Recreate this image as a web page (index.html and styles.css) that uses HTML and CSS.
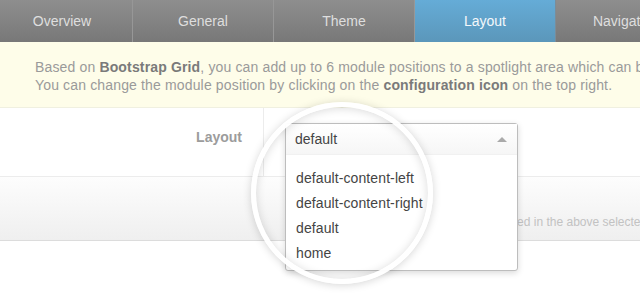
FILE: index.html
```html
<!DOCTYPE html>
<html>
<head>
<meta charset="utf-8">
<link rel="stylesheet" href="styles.css">
</head>
<body>
<div class="page">
  <nav class="tabs">
    <a class="tab">Overview</a>
    <a class="tab">General</a>
    <a class="tab">Theme</a>
    <a class="tab active">Layout</a>
    <a class="tab">Navigation</a>
  </nav>
  <div class="notice">
    <p>Based on <b>Bootstrap Grid</b>, you can add up to 6 module positions to a spotlight area which can be resized.</p>
    <p>You can change the module position by clicking on the <b>configuration icon</b> on the top right.</p>
  </div>
  <div class="form-row">
    <div class="label-cell">Layout</div>
    <div class="control-cell">
      <div class="chosen">
        <div class="chosen-head">
          <span>default</span>
          <span class="arrow"></span>
        </div>
        <ul class="chosen-list">
          <li>default-content-left</li>
          <li>default-content-right</li>
          <li>default</li>
          <li>home</li>
        </ul>
      </div>
    </div>
  </div>
  <div class="band">
    <span class="band-text">Modules of each position are positioned in the above selected layout</span>
  </div>
  <div class="lens"></div>
</div>
</body>
</html>
```
FILE: styles.css
```css
html, body {
  margin: 0;
  padding: 0;
  background: #fff;
}
body {
  font-family: "Liberation Sans", Arial, sans-serif;
  width: 640px;
  height: 300px;
  overflow: hidden;
}
.page {
  position: relative;
  width: 640px;
  height: 300px;
  overflow: hidden;
}
.tabs {
  display: flex;
  margin-left: -8px;
  height: 42px;
  background: linear-gradient(#8e8e8e, #787878);
}
.tab {
  flex: 0 0 140px;
  border-right: 1px solid #979797;
  display: flex;
  align-items: center;
  justify-content: center;
  font-size: 14px;
  color: #dedede;
  white-space: nowrap;
}
.tab.active {
  background: linear-gradient(#65acd7, #5b97ba);
  color: #f4f8fb;
  border-right-color: #7b8c98;
}
.notice {
  background: #fefde9;
  height: 66px;
  box-sizing: border-box;
  padding: 16px 0 0 35px;
  border-bottom: 1px solid #f0f0e0;
  font-size: 14px;
  letter-spacing: 0.15px;
  line-height: 18px;
  color: #9a9a9a;
  white-space: nowrap;
}
.notice p {
  margin: 0;
}
.notice b {
  color: #7a7a7a;
}
.form-row {
  display: flex;
  height: 68px;
  border-bottom: 1px solid #ececec;
}
.label-cell {
  width: 264px;
  box-sizing: border-box;
  border-right: 1px solid #ececec;
  text-align: right;
  padding: 21px 21px 0 0;
  font-size: 14px;
  font-weight: bold;
  color: #9c9c9c;
}
.control-cell {
  padding: 15px 0 0 21px;
  position: relative;
  z-index: 2;
}
.chosen {
  width: 233px;
  box-sizing: border-box;
  border: 1px solid #bdbdbd;
  border-radius: 3px;
  background: #fff;
  box-shadow: 0 2px 6px rgba(0, 0, 0, 0.15);
}
.chosen-head {
  height: 31px;
  box-sizing: border-box;
  display: flex;
  align-items: center;
  justify-content: space-between;
  padding: 0 10px 0 9px;
  border-bottom: 1px solid #f1f1f1;
  background: linear-gradient(#ffffff, #f6f6f6);
  font-size: 14px;
  color: #444;
}
.arrow {
  width: 0;
  height: 0;
  border-left: 5px solid transparent;
  border-right: 5px solid transparent;
  border-bottom: 5px solid #aaa;
}
.chosen-list {
  list-style: none;
  margin: 0;
  padding: 11px 0 4px 10px;
  font-size: 14px;
  letter-spacing: 0.1px;
  color: #444;
}
.chosen-list li {
  height: 25px;
  line-height: 25px;
}
.band {
  height: 64px;
  box-sizing: border-box;
  border-bottom: 1px solid #dcdcdc;
  background: linear-gradient(#fdfdfd, #efefef);
  padding: 38px 0 0 319px;
  font-size: 12px;
  color: #c2c2c2;
  white-space: nowrap;
}
.lens {
  position: absolute;
  left: 251px;
  top: 102px;
  width: 182px;
  height: 182px;
  box-sizing: border-box;
  border-radius: 50%;
  border: 5px solid rgba(255, 255, 255, 0.96);
  box-shadow: 0 1px 9px rgba(0, 0, 0, 0.17), inset 0 1px 10px rgba(0, 0, 0, 0.15);
  z-index: 3;
  pointer-events: none;
}
```
